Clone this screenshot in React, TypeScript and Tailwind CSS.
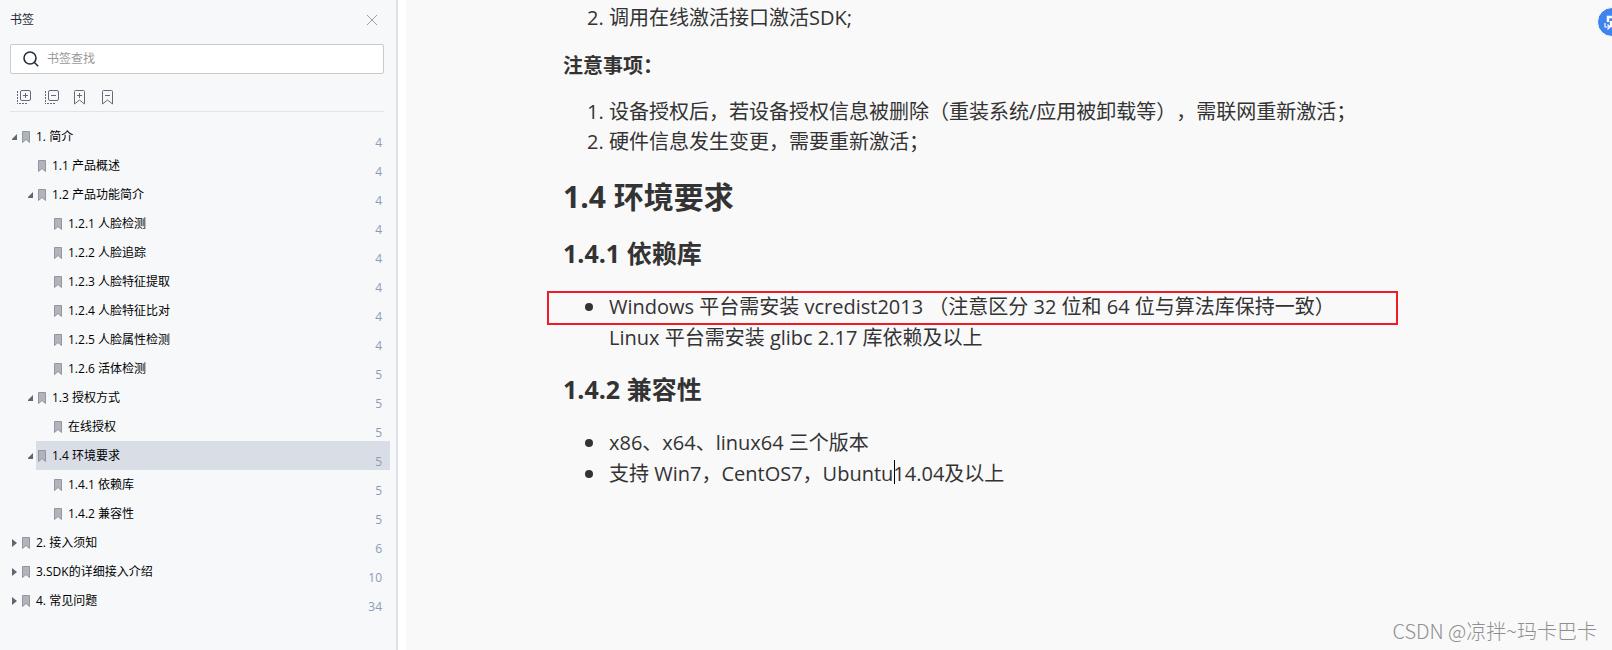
import { useState } from "react";
import type { ReactNode } from "react";

type Bookmark = {
    title: string;
    page: number;
    depth: number;
    state?: "open" | "closed";
};

const bookmarks: Bookmark[] = [
    { title: "1. 简介", page: 4, depth: 0, state: "open" },
    { title: "1.1 产品概述", page: 4, depth: 1 },
    { title: "1.2 产品功能简介", page: 4, depth: 1, state: "open" },
    { title: "1.2.1 人脸检测", page: 4, depth: 2 },
    { title: "1.2.2 人脸追踪", page: 4, depth: 2 },
    { title: "1.2.3 人脸特征提取", page: 4, depth: 2 },
    { title: "1.2.4 人脸特征比对", page: 4, depth: 2 },
    { title: "1.2.5 人脸属性检测", page: 4, depth: 2 },
    { title: "1.2.6 活体检测", page: 5, depth: 2 },
    { title: "1.3 授权方式", page: 5, depth: 1, state: "open" },
    { title: "在线授权", page: 5, depth: 2 },
    { title: "1.4 环境要求", page: 5, depth: 1, state: "open" },
    { title: "1.4.1 依赖库", page: 5, depth: 2 },
    { title: "1.4.2 兼容性", page: 5, depth: 2 },
    { title: "2. 接入须知", page: 6, depth: 0, state: "closed" },
    { title: "3.SDK的详细接入介绍", page: 10, depth: 0, state: "closed" },
    { title: "4. 常见问题", page: 34, depth: 0, state: "closed" },
];

const indent = ["pl-3", "pl-7", "pl-11"];

function Arrow({ state }: { state?: "open" | "closed" }) {
    return (
        <svg className="w-2 h-3 shrink-0" viewBox="0 0 8 12" fill="#5f6775">
            {state === "open" && <path d="M5 3v6H-1z" />}
            {state === "closed" && <path d="M0 2v8l5-4z" />}
        </svg>
    );
}

function BookmarkIcon() {
    return (
        <svg className="w-2 h-3 shrink-0" viewBox="0 0 8 12">
            <path d="M.5 11.5V.5h7v11L4 8.5z" fill="#b0b4bb" stroke="#92969f" />
        </svg>
    );
}

function TreeToolIcon({ plus }: { plus?: boolean }) {
    return (
        <svg width="14" height="15" viewBox="0 0 14 15" fill="none" stroke="#636b7b">
            <rect x="3.5" y=".5" width="10" height="10" rx="1.5" />
            <path d="M6 5.5h5" />
            {plus && <path d="M8.5 3v5" />}
            <path d="M.5 1v13" strokeDasharray="2 1" />
            <path d="M2 13.5h9" strokeDasharray="2 1" />
        </svg>
    );
}

function MarkToolIcon({ plus }: { plus?: boolean }) {
    return (
        <svg width="14" height="15" viewBox="-1 0 14 15" fill="none" stroke="#636b7b">
            <path d="M.5 14V1.5a1 1 0 0 1 1-1h8a1 1 0 0 1 1 1V14l-5-4z" />
            <path d="M3 5.5h5" />
            {plus && <path d="M5.5 3v5" />}
        </svg>
    );
}

function Sidebar() {
    const [selected, setSelected] = useState(11);

    return (
        <aside className="w-[398px] shrink-0 bg-[#f6f8fa] border-r-2 border-[#dfe2ea] text-xs font-['Open_Sans','Noto_Sans_CJK_SC',sans-serif]">
            <div className="flex items-center justify-between h-11 pl-[10px] pr-[17px] pb-1">
                <h1 className="text-[#1e2836]">书签</h1>
                <button aria-label="关闭" className="p-px">
                    <svg width="12" height="12" viewBox="0 0 12 12" stroke="#9a9fa8">
                        <path d="M1 1l10 10M11 1L1 11" />
                    </svg>
                </button>
            </div>
            <label className="flex items-center h-[30px] ml-[10px] mr-3 pl-3 gap-2 bg-white border border-[#c9cacc] rounded-xs">
                <svg width="16" height="16" viewBox="0 0 16 16" fill="none" stroke="#252f3f" strokeWidth="1.6">
                    <circle cx="7" cy="7" r="6" />
                    <path d="M11.2 11.2l4 4" />
                </svg>
                <input
                    aria-label="书签查找"
                    placeholder="书签查找"
                    className="flex-1 min-w-0 outline-none placeholder:text-[#999999]"
                />
            </label>
            <div className="flex items-end gap-[14px] h-[38px] ml-[10px] mr-3 pl-[7px] pb-[6px] border-b border-[#e2e4e8]">
                <button aria-label="全部展开"><TreeToolIcon plus /></button>
                <button aria-label="全部收起"><TreeToolIcon /></button>
                <button aria-label="添加书签"><MarkToolIcon plus /></button>
                <button aria-label="删除书签"><MarkToolIcon /></button>
            </div>
            <ul className="pt-[10px] pr-[6px]">
                {bookmarks.map((item, i) => (
                    <li key={item.title} className={`flex items-center ${indent[item.depth]}`}>
                        <Arrow state={item.state} />
                        <button
                            onClick={() => setSelected(i)}
                            className={`flex flex-1 items-center h-[29px] pl-[2px] pr-2 text-left text-black ${selected === i ? "bg-[#d9dee6]" : ""}`}
                        >
                            <BookmarkIcon />
                            <span className="flex-1 pl-[6px]">{item.title}</span>
                            <span className="self-end leading-[17px] text-[#8d9bb5]">{item.page}</span>
                        </button>
                    </li>
                ))}
            </ul>
        </aside>
    );
}

function BulletItem({ children }: { children: ReactNode }) {
    return (
        <li className="relative before:absolute before:-left-6 before:top-3 before:size-2 before:rounded-full before:bg-[#333333]">
            {children}
        </li>
    );
}

function Article() {
    return (
        <article className="max-w-[892px] mx-auto pt-[3px] text-xl leading-[30px] text-[#333333] [text-spacing-trim:space-all] font-['Open_Sans','Noto_Sans_CJK_SC',sans-serif]">
            <ol start={2} className="list-decimal pl-[46px]">
                <li>调用在线激活接口激活SDK;</li>
            </ol>
            <p className="mt-[18px] font-bold">注意事项：</p>
            <ol className="list-decimal mt-4 pl-[46px]">
                <li>设备授权后，若设备授权信息被删除（重装系统/应用被卸载等），需联网重新激活；</li>
                <li>硬件信息发生变更，需要重新激活；</li>
            </ol>
            <h2 className="mt-[18px] text-[30px] leading-[44px] font-bold">1.4 环境要求</h2>
            <h3 className="mt-4 text-[25px] leading-[36px] font-bold">1.4.1 依赖库</h3>
            <ul className="mt-5 pl-[46px] leading-[31px]">
                <BulletItem>
                    Windows 平台需安装 vcredist2013 （注意区分 32 位和 64 位与算法库保持一致）
                    <br />
                    Linux 平台需安装 glibc 2.17 库依赖及以上
                    <div className="absolute top-0 -left-[62px] right-[57px] h-[34px] border-2 border-[#ee1c25]" />
                </BulletItem>
            </ul>
            <h3 className="mt-[18px] text-[25px] leading-[36px] font-bold">1.4.2 兼容性</h3>
            <ul className="mt-5 pl-[46px] leading-[31px]">
                <BulletItem>x86、x64、linux64 三个版本</BulletItem>
                <BulletItem>
                    支持 Win7，CentOS7，Ubuntu
                    <span className="relative"><span className="absolute top-0 left-px w-px h-6 bg-black" /></span>
                    14.04及以上
                </BulletItem>
            </ul>
        </article>
    );
}

export default function App() {
    return (
        <div className="flex min-h-screen bg-white">
            <Sidebar />
            <main className="relative flex-1 ml-2 bg-[#f9f9f9] overflow-hidden">
                <Article />
                <button aria-label="翻译" className="absolute top-[7px] -right-[15px] w-[30px] h-[30px] rounded-full bg-[#3f83ee] border border-white">
                    <svg width="28" height="28" viewBox="0 0 28 28" fill="none" stroke="#ffffff">
                        <path d="M10 14V9h9v9h-6v-5" strokeWidth="2.5" />
                        <path d="M7 15v4h5M9.500 16.500l2.500 2.500-2.500 2.500" strokeWidth="1.200" />
                    </svg>
                </button>
                <p className="absolute right-[15px] bottom-1 text-xl leading-[30px] text-[#8f8f8f] font-light font-['Noto_Sans_CJK_SC',sans-serif]">
                    CSDN @凉拌~玛卡巴卡
                </p>
            </main>
        </div>
    );
}
